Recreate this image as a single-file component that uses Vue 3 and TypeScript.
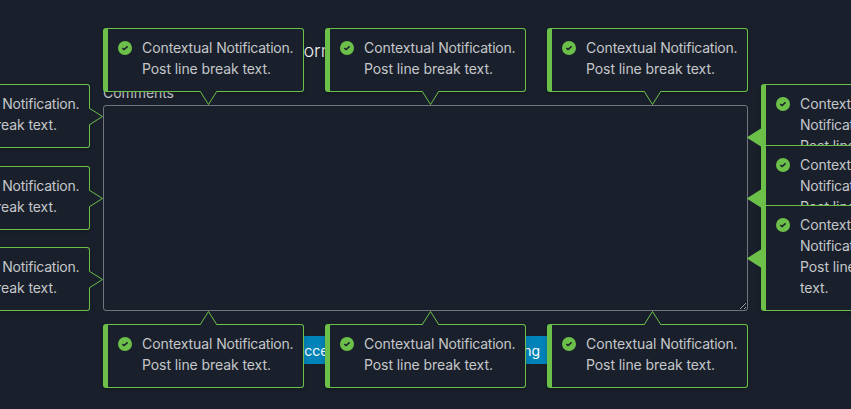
<script setup lang="ts">
type Side = 'top' | 'bottom' | 'left' | 'right'

interface Popup {
  side: Side
  x: number
  y: number
}

const popups: Popup[] = [
  { side: 'top', x: 103, y: 28 },
  { side: 'top', x: 325, y: 28 },
  { side: 'top', x: 547, y: 28 },
  { side: 'left', x: -111, y: 84 },
  { side: 'left', x: -111, y: 166 },
  { side: 'left', x: -111, y: 247 },
  { side: 'right', x: 761, y: 84 },
  { side: 'right', x: 761, y: 145 },
  { side: 'right', x: 761, y: 205 },
  { side: 'bottom', x: 103, y: 324 },
  { side: 'bottom', x: 325, y: 324 },
  { side: 'bottom', x: 547, y: 324 },
]
</script>

<template>
  <main class="page">
    <form class="form" @submit.prevent>
      <h1 class="title">Notification Popup Form</h1>
      <label class="label" for="comments">Comments</label>
      <textarea id="comments" class="area"></textarea>
      <div class="actions">
        <button class="btn" type="button">Toggle Success</button>
        <button class="btn" type="button">Toggle Warning</button>
      </div>
    </form>

    <div
      v-for="(p, i) in popups"
      :key="i"
      class="popup"
      :class="p.side"
      :style="{ left: p.x + 'px', top: p.y + 'px' }"
    >
      <svg class="icon" viewBox="0 0 14 14">
        <circle cx="7" cy="7" r="7" fill="#6cc04a" />
        <path d="M4.3 7.1 6.1 8.6 9.6 5.4" fill="none" stroke="#19202b" stroke-width="1.5" />
      </svg>
      <p class="message">Contextual <span class="tight">Notification.</span><br />Post line break text.</p>
      <svg v-if="p.side === 'top'" class="arrow" width="17" height="14" viewBox="0 0 17 14">
        <path class="fill" d="M.5 0v.5L8.5 13.5 16.5.5V0z" />
        <path class="line" d="M.3.5 8.5 13.5 16.7.5" />
      </svg>
      <svg v-else-if="p.side === 'bottom'" class="arrow" width="17" height="14" viewBox="0 0 17 14">
        <path class="fill" d="M.5 14v-.5L8.5.5 16.5 13.5v.5z" />
        <path class="line" d="M.3 13.5 8.5.5 16.7 13.5" />
      </svg>
      <svg v-else-if="p.side === 'left'" class="arrow" width="14" height="17" viewBox="0 0 14 17">
        <path class="fill" d="M0 .5h.5L13.5 8.5.5 16.5H0z" />
        <path class="line" d="M.5.3 13.5 8.5.5 16.7" />
      </svg>
      <svg v-else class="arrow" width="15" height="19" viewBox="0 0 15 19">
        <path d="M15-.3v19.6L-.3 9.5z" fill="#6cc04a" />
      </svg>
    </div>
  </main>
</template>

<style>
body {
  background: #19202b;
}
</style>

<style scoped>
.page {
  position: relative;
  box-sizing: border-box;
  width: 100%;
  height: 409px;
  padding: 37px 103px 0;
  overflow: hidden;
  background: #19202b;
  color: #c5c7ca;
  font: 14px/21px Inter, sans-serif;
}
.form {
  display: flex;
  flex-direction: column;
}
.title {
  margin: 0 0 18px;
  padding-left: 31px;
  color: #f0f1f2;
  font-size: 18px;
  font-weight: 300;
  line-height: 27px;
}
.label {
  height: 23px;
  letter-spacing: -0.06px;
}
.area {
  box-sizing: border-box;
  width: 645px;
  height: 206px;
  margin: 0;
  border: 1px solid #71757d;
  border-radius: 3px;
  background: transparent;
  resize: both;
}
.actions {
  display: flex;
  gap: 18px;
  padding: 25px 0 0 125px;
}
.btn {
  height: 28px;
  padding: 0 10px;
  border: 0;
  background: #0083b8;
  color: #fff;
  font: inherit;
  white-space: nowrap;
}
.btn:last-child {
  margin-left: auto;
  margin-right: 198px;
}
.popup {
  position: absolute;
  box-sizing: border-box;
  display: flex;
  gap: 10px;
  width: 201px;
  padding: 8px 9px 12px 10px;
  border: 1px solid #6cc04a;
  border-left-width: 5px;
  border-radius: 3px;
  background: #19202b;
  box-shadow: 0 2px 5px rgba(0, 0, 0, 0.2);
}
.right {
  width: 160px;
}
.icon {
  flex: none;
  width: 14px;
  height: 14px;
  margin-top: 4px;
}
.message {
  margin: 0;
  letter-spacing: -0.08px;
}
.tight {
  letter-spacing: -0.24px;
}
.top .message,
.bottom .message,
.left .message {
  white-space: nowrap;
}
.arrow {
  position: absolute;
  display: block;
  overflow: visible;
}
.fill {
  fill: #19202b;
}
.line {
  fill: none;
  stroke: #6cc04a;
}
.top .arrow {
  left: 92px;
  top: 62px;
}
.bottom .arrow {
  left: 92px;
  bottom: 62px;
}
.left .arrow {
  right: -14px;
  top: 23px;
}
.right .arrow {
  left: -19px;
  top: 43px;
}
</style>
